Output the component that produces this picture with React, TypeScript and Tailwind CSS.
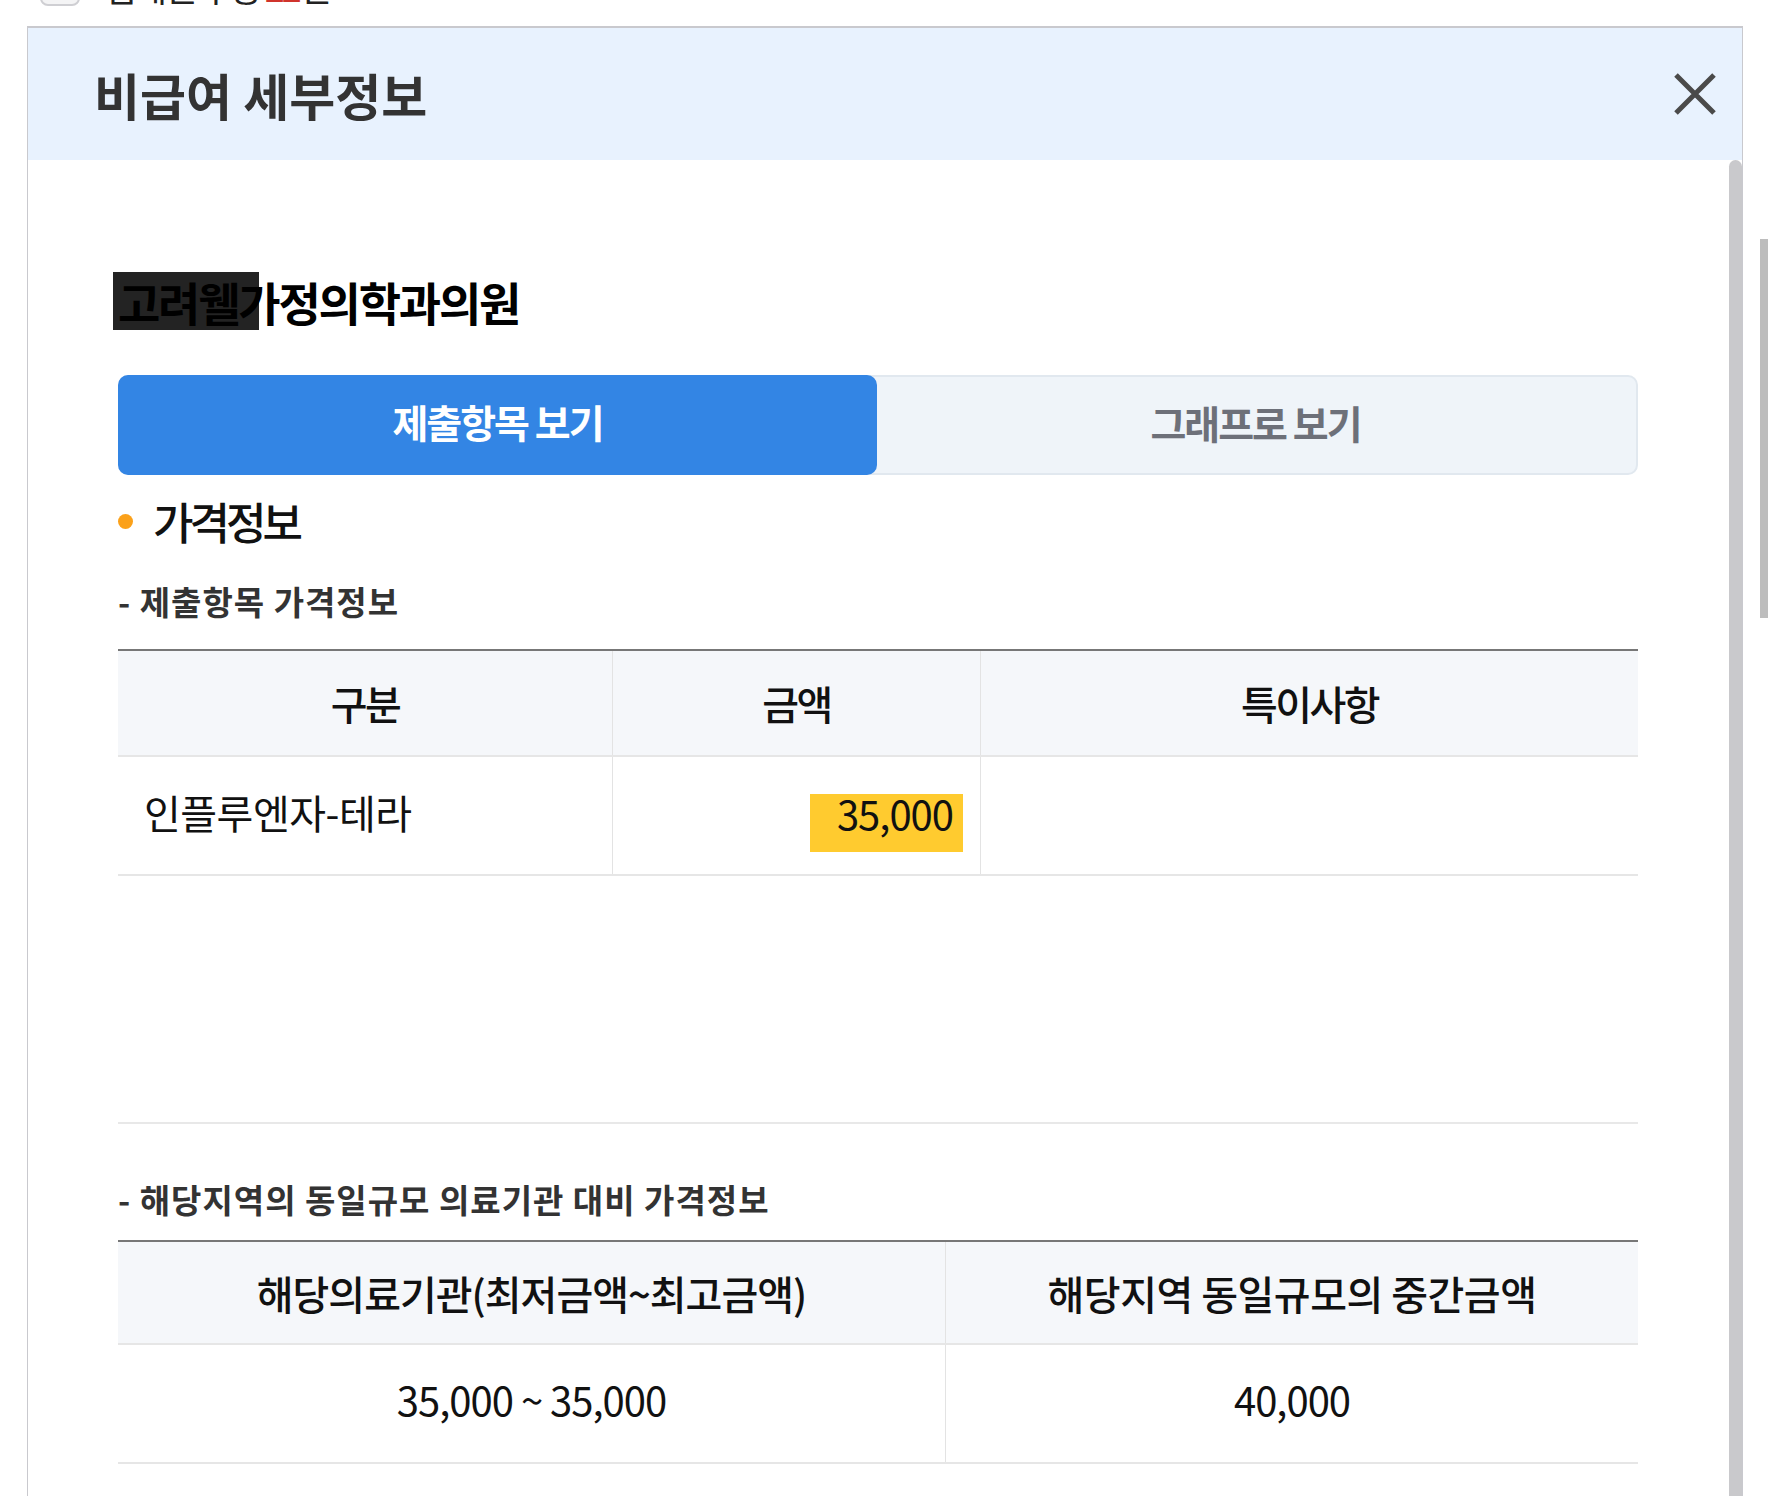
import React from 'react';

const font = { fontFamily: '"Noto Sans CJK KR", "Noto Sans", sans-serif' };

function CloseIcon() {
  return (
    <svg width="44" height="44" viewBox="0 0 44 44" className="shrink-0">
      <path d="M3 3 L41 41 M41 3 L3 41" stroke="#4a4a4a" strokeWidth="5" strokeLinecap="butt" />
    </svg>
  );
}

export default function App() {
  return (
    <div className="relative w-[1768px] h-[1496px] bg-white overflow-hidden text-[#111]" style={font}>
      {/* cut-off row above the modal */}
      <div className="h-[26px] overflow-hidden">
        <div className="flex items-center gap-[24px] pl-[40px] -mt-[34px] h-[40px]">
          <div className="w-[40px] h-[40px] rounded-[8px] border-2 border-[#cfcfd3] bg-[#f4f4f5]" />
          <span className="text-[36px] leading-[40px] tracking-[-3px] text-[#222]">
            집계된 수량 <span className="text-[#d0342c]">22</span>건
          </span>
        </div>
      </div>

      <div className="ml-[27px] w-[1716px] h-[1470px] border-t-2 border-x border-[#c9c9ce] flex flex-col">
        <div className="h-[132px] shrink-0 bg-[#e8f2fe] flex items-center justify-between pl-[66px] pr-[25px]">
          <h2 className="text-[50px] leading-none font-bold tracking-[0px] text-[#333]">비급여 세부정보</h2>
          <CloseIcon />
        </div>

        <div className="flex flex-1 min-h-0">
          <div className="flex-1 pl-[90px] pr-[91px] pt-[112px]">
            <div className="relative h-[58px] text-[46px] leading-[58px] font-bold tracking-[-2.2px] text-black">
              <div className="absolute -left-[5px] top-0 w-[146px] h-[58px] bg-[#232323]" />
              <span className="relative">고려웰가정의학과의원</span>
            </div>

            <div className="mt-[45px] h-[100px] rounded-[10px] bg-[#eff4f9] border-2 border-[#e1e8ef] flex">
              <div className="w-[759px] -m-[2px] h-[100px] pb-[8px] rounded-[10px] bg-[#3385e4] flex items-center justify-center text-white text-[39px] font-bold tracking-[-2px]">
                제출항목 보기
              </div>
              <div className="flex-1 flex items-center justify-center pb-[6px] text-[#6d7079] text-[39px] font-bold tracking-[-2px]">
                그래프로 보기
              </div>
            </div>

            <div className="mt-[22px] h-[48px] flex items-center">
              <span className="w-[15px] h-[15px] rounded-full bg-[#fba11a] mr-[20px]" />
              <span className="text-[44px] leading-[48px] font-medium tracking-[-4px]">가격정보</span>
            </div>

            <div className="mt-[36px] h-[40px] text-[33px] leading-[40px] font-bold tracking-[1px] text-[#333]">
              - 제출항목 가격정보
            </div>

            <div className="mt-[28px] border-t-2 border-[#777]">
              <div className="grid grid-cols-[494px_368px_658px] h-[106px] bg-[#f5f7fa] border-b-2 border-[#e6e6e6] text-[40px] font-medium tracking-[-2.5px]">
                <div className="flex items-center justify-center">구분</div>
                <div className="flex items-center justify-center border-l border-[#e3e3e3]">금액</div>
                <div className="flex items-center justify-center border-l border-[#e3e3e3]">특이사항</div>
              </div>
              <div className="grid grid-cols-[494px_368px_658px] h-[119px] border-b-2 border-[#e6e6e6] text-[40px] tracking-[-0.5px]">
                <div className="flex items-center pl-[26px] pb-[8px]">인플루엔자-테라</div>
                <div className="flex items-start justify-end pt-[37px] pr-[17px] border-l border-[#e3e3e3]">
                  <span className="w-[153px] h-[58px] bg-[#ffcb2f] flex items-start justify-end pr-[10px] leading-[38px] tracking-[-1px]">
                    35,000
                  </span>
                </div>
                <div className="border-l border-[#e3e3e3]" />
              </div>
            </div>

            <div className="h-[248px] border-b-2 border-[#e8e8e8]" />

            <div className="mt-[55px] h-[40px] text-[33px] leading-[40px] font-bold tracking-[1px] text-[#333]">
              - 해당지역의 동일규모 의료기관 대비 가격정보
            </div>

            <div className="mt-[21px] border-t-2 border-[#777]">
              <div className="grid grid-cols-[827px_693px] h-[103px] bg-[#f5f7fa] border-b-2 border-[#e6e6e6] text-[40px] font-medium">
                <div className="flex items-center justify-center tracking-[-1px]">해당의료기관(최저금액~최고금액)</div>
                <div className="flex items-center justify-center tracking-[-0.5px] border-l border-[#e3e3e3]">해당지역 동일규모의 중간금액</div>
              </div>
              <div className="grid grid-cols-[827px_693px] h-[119px] border-b-2 border-[#e6e6e6] text-[40px] tracking-[-1px]">
                <div className="flex items-center justify-center pb-[10px]">35,000 ~ 35,000</div>
                <div className="flex items-center justify-center pb-[10px] border-l border-[#e3e3e3]">40,000</div>
              </div>
            </div>
          </div>
          <div className="w-[13px] bg-[#c9c9cc] rounded-t-full" />
        </div>
      </div>

      {/* page scrollbar */}
      <div className="absolute left-[1760px] top-[239px] w-[8px] h-[379px] bg-[#bdbdbd]" />
    </div>
  );
}
